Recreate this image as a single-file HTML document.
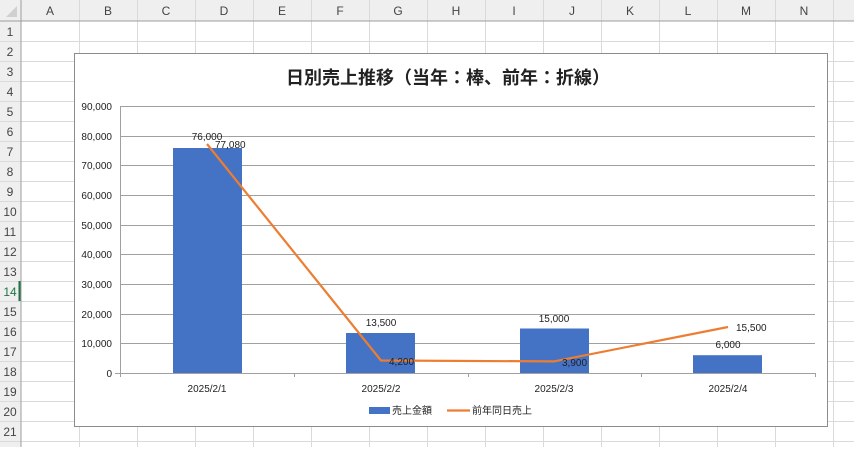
<!DOCTYPE html>
<html><head><meta charset="utf-8"><style>
body{margin:0;width:854px;height:447px;overflow:hidden;background:#fff;font-family:"Liberation Sans","Noto Sans CJK JP",sans-serif}
</style></head><body>
<svg width="854" height="447" xmlns="http://www.w3.org/2000/svg" font-family="Liberation Sans, Noto Sans CJK JP, sans-serif">
<rect x="0" y="0" width="854" height="21" fill="#efefef"/>
<rect x="0" y="0" width="21" height="447" fill="#efefef"/>
<polygon points="6,17 17,17 17,6" fill="#d0d0d0"/>
<g stroke="#dadada" stroke-width="1">
<line x1="79.5" y1="0" x2="79.5" y2="447"/><line x1="137.5" y1="0" x2="137.5" y2="447"/><line x1="195.5" y1="0" x2="195.5" y2="447"/><line x1="253.5" y1="0" x2="253.5" y2="447"/><line x1="311.5" y1="0" x2="311.5" y2="447"/><line x1="369.5" y1="0" x2="369.5" y2="447"/><line x1="427.5" y1="0" x2="427.5" y2="447"/><line x1="485.5" y1="0" x2="485.5" y2="447"/><line x1="543.5" y1="0" x2="543.5" y2="447"/><line x1="601.5" y1="0" x2="601.5" y2="447"/><line x1="659.5" y1="0" x2="659.5" y2="447"/><line x1="717.5" y1="0" x2="717.5" y2="447"/><line x1="775.5" y1="0" x2="775.5" y2="447"/><line x1="833.5" y1="0" x2="833.5" y2="447"/>
<line x1="0" y1="41.5" x2="854" y2="41.5"/><line x1="0" y1="61.5" x2="854" y2="61.5"/><line x1="0" y1="81.5" x2="854" y2="81.5"/><line x1="0" y1="101.5" x2="854" y2="101.5"/><line x1="0" y1="121.5" x2="854" y2="121.5"/><line x1="0" y1="141.5" x2="854" y2="141.5"/><line x1="0" y1="161.5" x2="854" y2="161.5"/><line x1="0" y1="181.5" x2="854" y2="181.5"/><line x1="0" y1="201.5" x2="854" y2="201.5"/><line x1="0" y1="221.5" x2="854" y2="221.5"/><line x1="0" y1="241.5" x2="854" y2="241.5"/><line x1="0" y1="261.5" x2="854" y2="261.5"/><line x1="0" y1="281.5" x2="854" y2="281.5"/><line x1="0" y1="301.5" x2="854" y2="301.5"/><line x1="0" y1="321.5" x2="854" y2="321.5"/><line x1="0" y1="341.5" x2="854" y2="341.5"/><line x1="0" y1="361.5" x2="854" y2="361.5"/><line x1="0" y1="381.5" x2="854" y2="381.5"/><line x1="0" y1="401.5" x2="854" y2="401.5"/><line x1="0" y1="421.5" x2="854" y2="421.5"/><line x1="0" y1="441.5" x2="854" y2="441.5"/>
</g>
<line x1="0" y1="21" x2="854" y2="21" stroke="#9e9e9e"/>
<line x1="21" y1="0" x2="21" y2="447" stroke="#9e9e9e"/>
<line x1="19.5" y1="281" x2="19.5" y2="301" stroke="#217346" stroke-width="2"/>
<g font-size="12" fill="#444" text-anchor="middle">
<text x="50" y="15">A</text><text x="108" y="15">B</text><text x="166" y="15">C</text><text x="224" y="15">D</text><text x="282" y="15">E</text><text x="340" y="15">F</text><text x="398" y="15">G</text><text x="456" y="15">H</text><text x="514" y="15">I</text><text x="572" y="15">J</text><text x="630" y="15">K</text><text x="688" y="15">L</text><text x="746" y="15">M</text><text x="804" y="15">N</text>
<text x="10" y="36">1</text><text x="10" y="56">2</text><text x="10" y="76">3</text><text x="10" y="96">4</text><text x="10" y="116">5</text><text x="10" y="136">6</text><text x="10" y="156">7</text><text x="10" y="176">8</text><text x="10" y="196">9</text><text x="10" y="216">10</text><text x="10" y="236">11</text><text x="10" y="256">12</text><text x="10" y="276">13</text><text x="10" y="296" fill="#217346">14</text><text x="10" y="316">15</text><text x="10" y="336">16</text><text x="10" y="356">17</text><text x="10" y="376">18</text><text x="10" y="396">19</text><text x="10" y="416">20</text><text x="10" y="436">21</text>
</g>
<rect x="74.5" y="53.5" width="753" height="373" fill="#fff" stroke="#8c8c8c"/>
<text x="448" y="84" font-size="18" font-weight="bold" text-anchor="middle" fill="#222">日別売上推移（当年：棒、前年：折線）</text>
<g stroke="#a0a0a0" stroke-width="1">
<line x1="120" y1="106.5" x2="815" y2="106.5"/><line x1="120" y1="136.5" x2="815" y2="136.5"/><line x1="120" y1="165.5" x2="815" y2="165.5"/><line x1="120" y1="195.5" x2="815" y2="195.5"/><line x1="120" y1="225.5" x2="815" y2="225.5"/><line x1="120" y1="254.5" x2="815" y2="254.5"/><line x1="120" y1="284.5" x2="815" y2="284.5"/><line x1="120" y1="314.5" x2="815" y2="314.5"/><line x1="120" y1="343.5" x2="815" y2="343.5"/>
<line x1="120.5" y1="106" x2="120.5" y2="377"/>
<line x1="115" y1="373.5" x2="815" y2="373.5"/>
<line x1="294.5" y1="373" x2="294.5" y2="377"/><line x1="468.5" y1="373" x2="468.5" y2="377"/><line x1="641.5" y1="373" x2="641.5" y2="377"/><line x1="815.5" y1="373" x2="815.5" y2="377"/>
</g>
<g font-size="10" fill="#222" text-anchor="end">
<text x="112" y="110">90,000</text><text x="112" y="140">80,000</text><text x="112" y="169">70,000</text><text x="112" y="199">60,000</text><text x="112" y="229">50,000</text><text x="112" y="258">40,000</text><text x="112" y="288">30,000</text><text x="112" y="318">20,000</text><text x="112" y="347">10,000</text><text x="112" y="377">0</text>
</g>
<g fill="#4472c4">
<rect x="173" y="148" width="69" height="225"/>
<rect x="346" y="333" width="69" height="40"/>
<rect x="520" y="328.5" width="69" height="44.5"/>
<rect x="693" y="355.2" width="69" height="17.8"/>
</g>
<polyline points="207,144 381,360.5 554,361.4 728,327" fill="none" stroke="#ed7d31" stroke-width="2.2"/>
<g font-size="10" fill="#222" text-anchor="middle">
<text x="207" y="140">76,000</text>
<text x="381" y="326">13,500</text>
<text x="554" y="322">15,000</text>
<text x="728" y="348">6,000</text>
</g>
<g font-size="10" fill="#222">
<text x="215" y="148">77,080</text>
<text x="389" y="365">4,200</text>
<text x="562" y="366">3,900</text>
<text x="736" y="331">15,500</text>
</g>
<g font-size="10" fill="#222" text-anchor="middle">
<text x="207" y="392">2025/2/1</text><text x="381" y="392">2025/2/2</text><text x="554" y="392">2025/2/3</text><text x="728" y="392">2025/2/4</text>
</g>
<rect x="369" y="407" width="21" height="7" fill="#4472c4"/>
<text x="392" y="414" font-size="10" fill="#222">売上金額</text>
<line x1="447" y1="410.5" x2="470" y2="410.5" stroke="#ed7d31" stroke-width="2.2"/>
<text x="472" y="414" font-size="10" fill="#222">前年同日売上</text>
</svg>
</body></html>
